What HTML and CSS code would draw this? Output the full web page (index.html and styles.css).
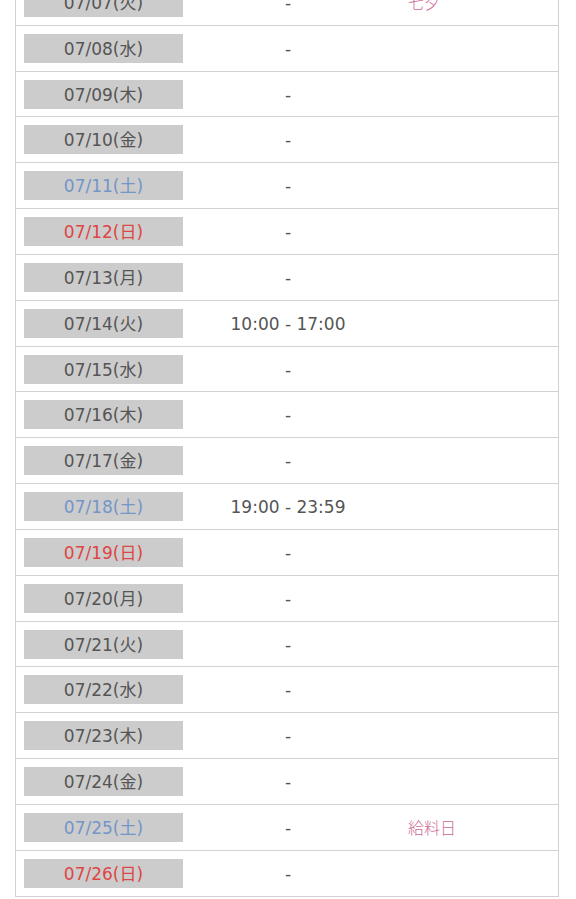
FILE: index.html
```html
<!DOCTYPE html>
<html lang="ja">
<head>
<meta charset="utf-8">
<link rel="stylesheet" href="styles.css">
</head>
<body>
<div class="table">
  <div class="row"><div class="date"><span>07/07(火)</span></div><div class="time">-</div><div class="note">七夕</div></div>
  <div class="row"><div class="date"><span>07/08(水)</span></div><div class="time">-</div><div class="note"></div></div>
  <div class="row"><div class="date"><span>07/09(木)</span></div><div class="time">-</div><div class="note"></div></div>
  <div class="row"><div class="date"><span>07/10(金)</span></div><div class="time">-</div><div class="note"></div></div>
  <div class="row"><div class="date sat"><span>07/11(土)</span></div><div class="time">-</div><div class="note"></div></div>
  <div class="row"><div class="date sun"><span>07/12(日)</span></div><div class="time">-</div><div class="note"></div></div>
  <div class="row"><div class="date"><span>07/13(月)</span></div><div class="time">-</div><div class="note"></div></div>
  <div class="row"><div class="date"><span>07/14(火)</span></div><div class="time">10:00 - 17:00</div><div class="note"></div></div>
  <div class="row"><div class="date"><span>07/15(水)</span></div><div class="time">-</div><div class="note"></div></div>
  <div class="row"><div class="date"><span>07/16(木)</span></div><div class="time">-</div><div class="note"></div></div>
  <div class="row"><div class="date"><span>07/17(金)</span></div><div class="time">-</div><div class="note"></div></div>
  <div class="row"><div class="date sat"><span>07/18(土)</span></div><div class="time">19:00 - 23:59</div><div class="note"></div></div>
  <div class="row"><div class="date sun"><span>07/19(日)</span></div><div class="time">-</div><div class="note"></div></div>
  <div class="row"><div class="date"><span>07/20(月)</span></div><div class="time">-</div><div class="note"></div></div>
  <div class="row"><div class="date"><span>07/21(火)</span></div><div class="time">-</div><div class="note"></div></div>
  <div class="row"><div class="date"><span>07/22(水)</span></div><div class="time">-</div><div class="note"></div></div>
  <div class="row"><div class="date"><span>07/23(木)</span></div><div class="time">-</div><div class="note"></div></div>
  <div class="row"><div class="date"><span>07/24(金)</span></div><div class="time">-</div><div class="note"></div></div>
  <div class="row"><div class="date sat"><span>07/25(土)</span></div><div class="time">-</div><div class="note">給料日</div></div>
  <div class="row"><div class="date sun"><span>07/26(日)</span></div><div class="time">-</div><div class="note"></div></div>
</div>
</body>
</html>
```
FILE: styles.css
```css
html, body {
  margin: 0;
  padding: 0;
  background: #ffffff;
}
body {
  font-family: "DejaVu Sans", "Noto Sans CJK JP", sans-serif;
  color: #505050;
  font-size: 17px;
}
.table {
  margin: -20px 0 0 15px;
  width: 544px;
  border-left: 1px solid #d2d2d2;
  border-right: 1px solid #d2d2d2;
  box-sizing: border-box;
}
.row {
  display: grid;
  grid-template-columns: 175px 194px 1fr;
  align-items: center;
  height: 45.84px;
  box-sizing: border-box;
  border-bottom: 1px solid #d2d2d2;
}
.date {
  padding: 0 8px 0 8px;
}
.date span {
  display: flex;
  align-items: center;
  justify-content: center;
  height: 29px;
  box-sizing: border-box;
  padding-top: 2px;
  background: #cccccc;
  line-height: 1;
  color: #555555;
}
.date.sat span { color: #7395c8; }
.date.sun span { color: #de4545; }
.time {
  text-align: center;
  line-height: 1;
  padding-top: 2px;
  color: #555555;
}
.note {
  padding-left: 23px;
  color: #cc6b94;
  line-height: 1;
  font-size: 16px;
  font-family: "Noto Sans CJK JP", sans-serif;
  font-weight: 300;
}
```
